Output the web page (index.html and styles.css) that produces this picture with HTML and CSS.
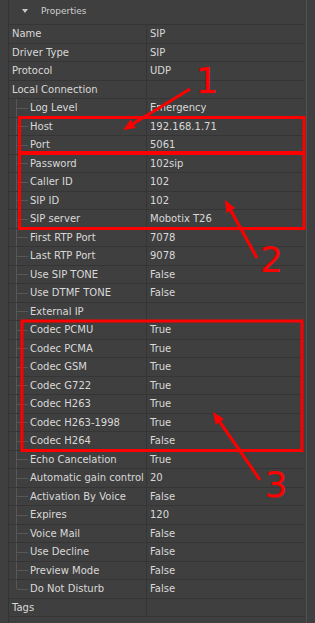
FILE: index.html
```html
<!DOCTYPE html>
<html lang="en">
<head>
    <meta charset="UTF-8">
    <meta name="viewport" content="width=device-width, initial-scale=1.0">
    <title>Properties</title>
    <link rel="stylesheet" href="styles.css">
</head>
<body>

    <div class="panel">
        <div class="main">
            <div class="inner">
                <div class="header">
                    <svg class="caret" width="6" height="4" viewBox="0 0 6 4"><polygon points="0,0 6,0 3,4" fill="#c8c8c8"/></svg>
                    <span>Properties</span>
                </div>

                <div class="grid">
                    <div class="row"><div class="name">Name</div><div class="value">SIP</div></div>
                    <div class="row"><div class="name">Driver Type</div><div class="value">SIP</div></div>
                    <div class="row"><div class="name">Protocol</div><div class="value">UDP</div></div>
                    <div class="row"><div class="name">Local Connection</div><div class="value"></div></div>

                    <div class="row child"><div class="name">Log Level</div><div class="value">Emergency</div></div>
                    <div class="row child"><div class="name">Host</div><div class="value">192.168.1.71</div></div>
                    <div class="row child"><div class="name">Port</div><div class="value">5061</div></div>
                    <div class="row child"><div class="name">Password</div><div class="value">102sip</div></div>
                    <div class="row child"><div class="name">Caller ID</div><div class="value">102</div></div>
                    <div class="row child"><div class="name">SIP ID</div><div class="value">102</div></div>
                    <div class="row child"><div class="name">SIP server</div><div class="value">Mobotix T26</div></div>
                    <div class="row child"><div class="name">First RTP Port</div><div class="value">7078</div></div>
                    <div class="row child"><div class="name">Last RTP Port</div><div class="value">9078</div></div>
                    <div class="row child"><div class="name">Use SIP TONE</div><div class="value">False</div></div>
                    <div class="row child"><div class="name">Use DTMF TONE</div><div class="value">False</div></div>
                    <div class="row child"><div class="name">External IP</div><div class="value"></div></div>
                    <div class="row child"><div class="name">Codec PCMU</div><div class="value">True</div></div>
                    <div class="row child"><div class="name">Codec PCMA</div><div class="value">True</div></div>
                    <div class="row child"><div class="name">Codec GSM</div><div class="value">True</div></div>
                    <div class="row child"><div class="name">Codec G722</div><div class="value">True</div></div>
                    <div class="row child"><div class="name">Codec H263</div><div class="value">True</div></div>
                    <div class="row child"><div class="name">Codec H263-1998</div><div class="value">True</div></div>
                    <div class="row child"><div class="name">Codec H264</div><div class="value">False</div></div>
                    <div class="row child"><div class="name">Echo Cancelation</div><div class="value">True</div></div>
                    <div class="row child"><div class="name">Automatic gain control</div><div class="value">20</div></div>
                    <div class="row child"><div class="name">Activation By Voice</div><div class="value">False</div></div>
                    <div class="row child"><div class="name">Expires</div><div class="value">120</div></div>
                    <div class="row child"><div class="name">Voice Mail</div><div class="value">False</div></div>
                    <div class="row child"><div class="name">Use Decline</div><div class="value">False</div></div>
                    <div class="row child"><div class="name">Preview Mode</div><div class="value">False</div></div>
                    <div class="row child last"><div class="name">Do Not Disturb</div><div class="value">False</div></div>

                    <div class="row"><div class="name">Tags</div><div class="value"></div></div>
                </div>
            </div>
        </div>

        <!-- red annotations drawn over the screenshot -->
        <svg class="marks" width="315" height="623" viewBox="0 0 315 623">
            <g fill="none" stroke="#ff0000" stroke-width="3">
                <rect x="19.5" y="117.5" width="284.5" height="35"/>
                <rect x="19.5" y="153.5" width="284.5" height="75"/>
                <rect x="22" y="321" width="280" height="129.5"/>
                <line x1="190" y1="89" x2="133.2" y2="123.7"/>
                <line x1="257" y1="258" x2="230.8" y2="210.5"/>
                <line x1="260" y1="480" x2="219.8" y2="421.9"/>
            </g>
            <g fill="#ff0000">
                <polygon points="123,130 135.8,128 130.6,119.5"/>
                <polygon points="225,200 235.2,208.1 226.4,212.9"/>
                <polygon points="213,412 223.9,419.1 215.7,424.7"/>
                <text x="207" y="93" class="num">1</text>
                <text x="271.5" y="272" class="num">2</text>
                <text x="276" y="497" class="num">3</text>
            </g>
        </svg>
    </div>

</body>
</html>
```

FILE: styles.css
```css
body {
    margin: 0;
    padding: 0;
    background-color: #3f3f3f;
    font-family: "DejaVu Sans", Verdana, sans-serif;
    font-size: 10px;
    color: #d9d9d9;
    overflow: hidden;
}

.panel {
    position: relative;
    width: 315px;
    height: 623px;
}

.main {
    width: 298px;
    height: 623px;
    padding-left: 8px;
    border-right: 1px solid #525252;
}

.inner {
    height: 100%;
    border-left: 1px solid #343434;
    margin-right: 1px;
}

.header {
    height: 22px;
    padding-bottom: 2px;
    display: flex;
    align-items: center;
    font-size: 9px;
    color: #cfcfcf;
}

.caret {
    margin-left: 13px;
    margin-right: 13px;
}

.grid {
    border-top: 1px solid #353535;
}

.row {
    display: flex;
    height: 18.5px;
    box-sizing: border-box;
    border-bottom: 1px solid #353535;
    line-height: 17.5px;
    white-space: nowrap;
}

.name {
    position: relative;
    width: 134px;
    padding-left: 3px;
    border-right: 1px solid #353535;
    overflow: hidden;
}

.value {
    flex: 1;
    padding-left: 3px;
}

/* tree lines */
.child .name {
    padding-left: 21px;
    width: 116px;
}

.child .name::before {
    content: "";
    position: absolute;
    left: 7px;
    top: 0;
    bottom: -1px;
    border-left: 1px solid #575757;
}

.child.last .name::before {
    bottom: 50%;
}

.child .name::after {
    content: "";
    position: absolute;
    left: 8px;
    top: 50%;
    width: 11px;
    border-top: 1px solid #575757;
}

.marks {
    position: absolute;
    left: 0;
    top: 0;
    pointer-events: none;
}

.num {
    font-family: "DejaVu Sans", sans-serif;
    font-size: 36px;
    text-anchor: middle;
}
```
